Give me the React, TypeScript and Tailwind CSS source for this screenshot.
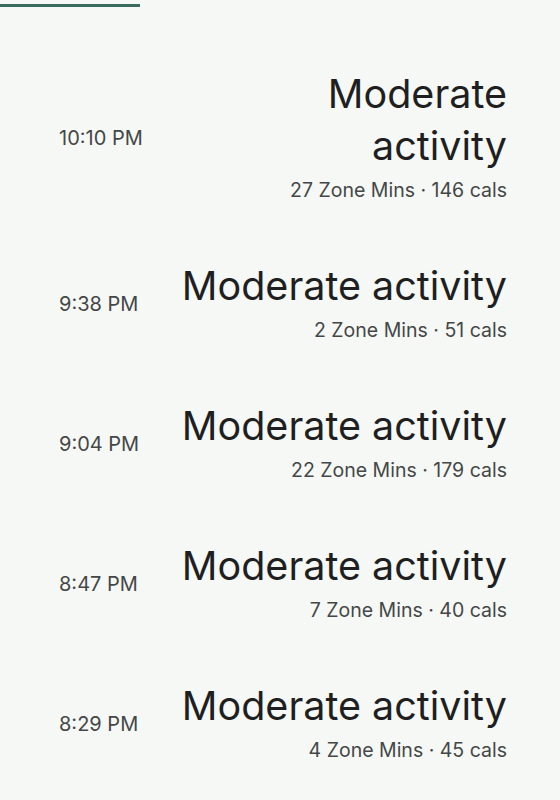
import React from 'react';

type Session = {
  time: string;
  title: string;
  zoneMins: number;
  cals: number;
};

const sessions: Session[] = [
  { time: '10:10 PM', title: 'Moderate activity', zoneMins: 27, cals: 146 },
  { time: '9:38 PM', title: 'Moderate activity', zoneMins: 2, cals: 51 },
  { time: '9:04 PM', title: 'Moderate activity', zoneMins: 22, cals: 179 },
  { time: '8:47 PM', title: 'Moderate activity', zoneMins: 7, cals: 40 },
  { time: '8:29 PM', title: 'Moderate activity', zoneMins: 4, cals: 45 },
];

const App: React.FC = () => {
  return (
    <div
      className="min-h-[800px] w-full bg-[#f6f8f6] overflow-hidden"
      style={{ fontFamily: 'Inter, Roboto, sans-serif' }}
    >
      {/* Tab indicator */}
      <div className="pt-[4px]">
        <div className="h-[3px] w-[140px] bg-[#3a6b5f]" />
      </div>

      <ul className="pt-[32px]">
        {sessions.map((s, i) => (
          <li key={i} className="flex items-center pl-[59px] pr-[53px] py-[29px]">
            <span className="mt-[6px] shrink-0 text-[20px] text-[#444746]">{s.time}</span>
            <div className="flex-1 pl-[40px] text-right">
              <div className="text-[39.5px] leading-[52px] text-[#1f1f1f]">{s.title}</div>
              <div className="mt-[6px] text-[19.5px] leading-[24px] text-[#444746]">
                {s.zoneMins} Zone Mins · {s.cals} cals
              </div>
            </div>
          </li>
        ))}
      </ul>
    </div>
  );
};

export default App;
